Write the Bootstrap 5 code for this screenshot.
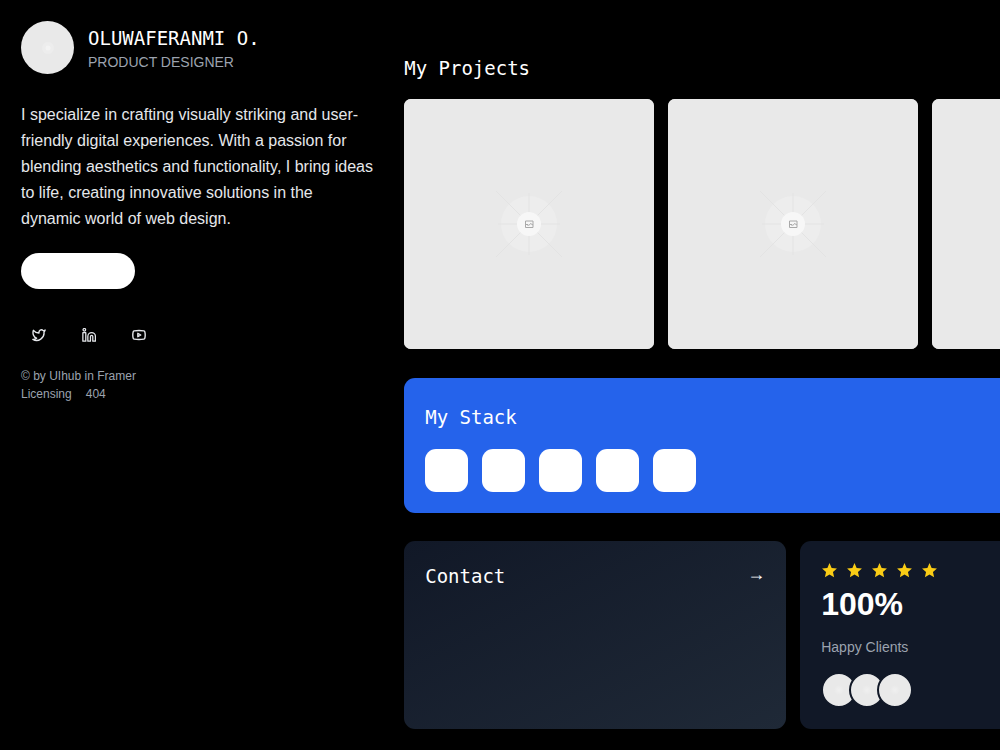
<!DOCTYPE html>
<html lang="en">
<head>
<meta charset="utf-8">
<meta name="viewport" content="width=device-width, initial-scale=1">
<title>Oluwaferanmi O. – Product Designer</title>
<link href="https://cdn.jsdelivr.net/npm/bootstrap@5.3.0/dist/css/bootstrap.min.css" rel="stylesheet">
<style>
  body { background: #000; color: #fff; font-family: "Liberation Sans", Arial, sans-serif; }
  .page { padding: 21px 0 21px 21px; gap: 21px; }
  .profile { flex: 0 0 37%; min-width: 0; }
  .work { flex: 0 0 auto; width: max-content; padding-top: 33px; }
  .mono { font-family: "DejaVu Sans Mono", monospace; font-size: 19px; line-height: 28px; font-weight: 400; margin: 0; }
  .muted { color: #9ca3af; }
  .gap-14 { gap: 14px; }
  .portrait { width: 53px; height: 53px; }
  .role { font-size: 14px; line-height: 20px; }
  .bio { font-size: 16px; line-height: 26px; color: #e5e7eb; margin: 28px 0 21px; padding-right: 8px; }
  .cta { width: 114px; height: 36px; background: #fff; }
  .social { margin: 28px 0 14px; }
  .social a { width: 36px; height: 36px; color: #e5e7eb; }
  .legal { font-size: 12px; line-height: 18px; }
  .legal a { color: inherit; text-decoration: none; }
  .thumb { width: 250px; height: 250px; border-radius: 7px; background: #e9e9e9; }
  .projects { margin: 17px 0 29px; }
  .panel { border-radius: 11px; padding: 21px; }
  .stack { background: #2563eb; padding-top: 25px; }
  .tool { width: 43px; height: 43px; border-radius: 11px; background: #fff; }
  .tools { margin-top: 18px; }
  .lower { display: grid; grid-template-columns: 1fr 1fr; margin-top: 28px; }
  .contact { background: linear-gradient(to bottom right, #111827, #1f2937); }
  .clients { background: #111827; }
  .arrow { font-size: 18px; line-height: 24px; color: #fff; text-decoration: none; }
  .score { font-size: 32px; line-height: 36px; font-weight: 700; margin: 7px 0 15px; }
  .faces { margin-top: 15px; }
  .face { width: 36px; height: 36px; border: 2px solid #111827; background: radial-gradient(circle, #f0f0f0, #e9e9e9 5px); }
  .face + .face { margin-left: -8px; }
</style>
</head>
<body>
<svg class="d-none" aria-hidden="true">
  <symbol id="placeholder" viewBox="0 0 250 250">
    <rect width="250" height="250" fill="#e9e9e9"/>
    <circle cx="125" cy="125" r="28" fill="#ededed"/>
    <path d="M92 92l66 66M158 92l-66 66M94 125h62M125 94v62" stroke="#e3e3e3" fill="none"/>
    <circle cx="125" cy="125" r="12" fill="#f7f7f7"/>
    <path d="M121.500 122h7.500v6.500h-7.500zM121.500 125.500h2.500v1.500M125 126.500l1.500-2 2.500 1.500" stroke="#a8a8a8" fill="none"/>
  </symbol>
  <symbol id="star" viewBox="0 0 24 24"><path fill="#facc15" d="M12 1.500l3 7 7.500.7-5.600 5 1.600 7.300L12 17.700l-6.500 3.800 1.600-7.300-5.600-5 7.500-.7z"/></symbol>
</svg>

<div class="page d-flex align-items-start overflow-hidden">
  <aside class="profile">
    <header class="d-flex align-items-center gap-14">
      <svg class="portrait rounded-circle flex-shrink-0" viewBox="0 0 53 53" role="img" aria-label="Portrait"><rect width="53" height="53" fill="#e9e9e9"/><circle cx="27" cy="27" r="6" fill="#ededed"/><circle cx="27" cy="27" r="2.500" fill="#f3f3f3"/></svg>
      <div>
        <h1 class="mono text-nowrap">OLUWAFERANMI O.</h1>
        <div class="role muted">PRODUCT DESIGNER</div>
      </div>
    </header>
    <p class="bio">I specialize in crafting visually striking and user-friendly digital experiences. With a passion for blending aesthetics and functionality, I bring ideas to life, creating innovative solutions in the dynamic world of web design.</p>
    <button type="button" class="cta btn rounded-pill p-0 border-0 d-block" aria-label="Get in touch"></button>
    <nav class="social d-flex gap-14">
      <a href="#" class="d-flex align-items-center justify-content-center" aria-label="Twitter">
        <svg width="14" height="14" viewBox="0 0 24 24" fill="none" stroke="currentColor" stroke-width="2.400" stroke-linecap="round" stroke-linejoin="round"><path d="M22.500 3.500s-.7 2.100-2 3.400c1.600 10-10 18.300-19 12.600 2.400.1 4.700-.6 6.300-2C2.500 15.500.5 9.100 2.500 4c2.400 3.100 5.900 4.700 9.500 4.600-.9-4.700 4-7.300 7.200-4.100 1.100 0 3.300-1 3.300-1z"/></svg>
      </a>
      <a href="#" class="d-flex align-items-center justify-content-center" aria-label="LinkedIn">
        <svg width="14" height="14" viewBox="0 0 24 24" fill="none" stroke="currentColor" stroke-width="2.200" stroke-linejoin="round"><circle cx="4" cy="3" r="2.200"/><path d="M1.500 8H6.500V22.500h-5zM10 22.500v-8a6.500 6.500 0 0 1 13 0v8h-4.500v-8a2 2 0 0 0-4 0v8z"/></svg>
      </a>
      <a href="#" class="d-flex align-items-center justify-content-center" aria-label="YouTube">
        <svg width="14" height="14" viewBox="0 0 24 24" fill="none" stroke="currentColor" stroke-width="2.400" stroke-linejoin="round"><path d="M2 17.500a24 24 0 0 1 0-11 2 2 0 0 1 1.600-1.600 50 50 0 0 1 16.800 0A2 2 0 0 1 22 6.500a24 24 0 0 1 0 11 2 2 0 0 1-1.600 1.600 50 50 0 0 1-16.800 0A2 2 0 0 1 2 17.500z"/><path d="M10 15l5-3-5-3z"/></svg>
      </a>
    </nav>
    <footer class="legal muted">
      <div>© by UIhub in Framer</div>
      <div class="d-flex gap-14"><a href="#">Licensing</a><a href="#">404</a></div>
    </footer>
  </aside>

  <main class="work">
    <h2 class="mono">My Projects</h2>
    <div class="projects d-flex gap-14">
      <svg class="thumb"><use href="#placeholder"/></svg>
      <svg class="thumb"><use href="#placeholder"/></svg>
      <svg class="thumb"><use href="#placeholder"/></svg>
    </div>
    <section class="panel stack">
      <h2 class="mono">My Stack</h2>
      <div class="tools d-flex gap-14">
        <div class="tool"></div><div class="tool"></div><div class="tool"></div><div class="tool"></div><div class="tool"></div>
      </div>
    </section>
    <div class="lower gap-14">
      <section class="panel contact d-flex justify-content-between align-items-start">
        <h2 class="mono">Contact</h2>
        <a href="#" class="arrow" aria-label="Contact me">→</a>
      </section>
      <section class="panel clients">
        <div class="d-flex gap-2">
          <svg width="17" height="17"><use href="#star"/></svg><svg width="17" height="17"><use href="#star"/></svg><svg width="17" height="17"><use href="#star"/></svg><svg width="17" height="17"><use href="#star"/></svg><svg width="17" height="17"><use href="#star"/></svg>
        </div>
        <div class="score">100%</div>
        <div class="role muted">Happy Clients</div>
        <div class="faces d-flex">
          <div class="face rounded-circle"></div><div class="face rounded-circle"></div><div class="face rounded-circle"></div>
        </div>
      </section>
    </div>
  </main>
</div>
<script src="https://cdn.jsdelivr.net/npm/bootstrap@5.3.0/dist/js/bootstrap.bundle.min.js"></script>
</body>
</html>
